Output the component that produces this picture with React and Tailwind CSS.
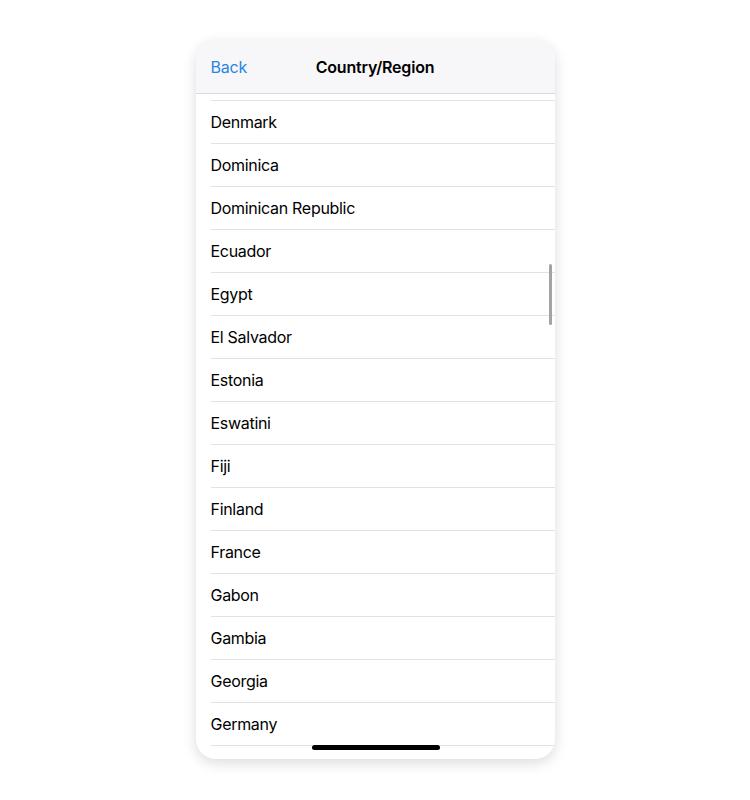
import React from "react";

const countries = [
  "Denmark",
  "Dominica",
  "Dominican Republic",
  "Ecuador",
  "Egypt",
  "El Salvador",
  "Estonia",
  "Eswatini",
  "Fiji",
  "Finland",
  "France",
  "Gabon",
  "Gambia",
  "Georgia",
  "Germany",
];

export default function App() {
  return (
    <div
      className="w-[750px] h-[800px] bg-white flex justify-center pt-[40px]"
      style={{ fontFamily: "Inter, 'Noto Sans', sans-serif" }}
    >
      <div className="relative w-[359px] h-[719px] rounded-[20px] overflow-hidden bg-white shadow-[0_4px_14px_rgba(0,0,0,0.14)] flex flex-col">
        <div className="h-[54px] shrink-0 bg-[#f7f6f8] border-b border-[#d9d9dc] flex items-center relative">
          <span className="absolute left-[15px] text-[16px] tracking-[-0.2px] text-[#2a85e3]">Back</span>
          <span className="w-full text-center text-[16px] tracking-[-0.2px] font-semibold text-black">Country/Region</span>
        </div>
        <div className="flex-1 overflow-hidden">
          <div className="h-[7px] ml-[15px] border-b border-[#e2e2e4]" />
          {countries.map((c) => (
            <div key={c} className="h-[43px] ml-[15px] border-b border-[#e2e2e4] flex items-center text-[16px] tracking-[-0.3px] text-black">
              {c}
            </div>
          ))}
        </div>
        <div className="absolute left-[353px] top-[224px] w-[3px] h-[61px] rounded-full bg-[#a3a3a5]" />
        <div className="absolute left-[116px] bottom-[9px] w-[128px] h-[5px] rounded-full bg-black" />
      </div>
    </div>
  );
}
